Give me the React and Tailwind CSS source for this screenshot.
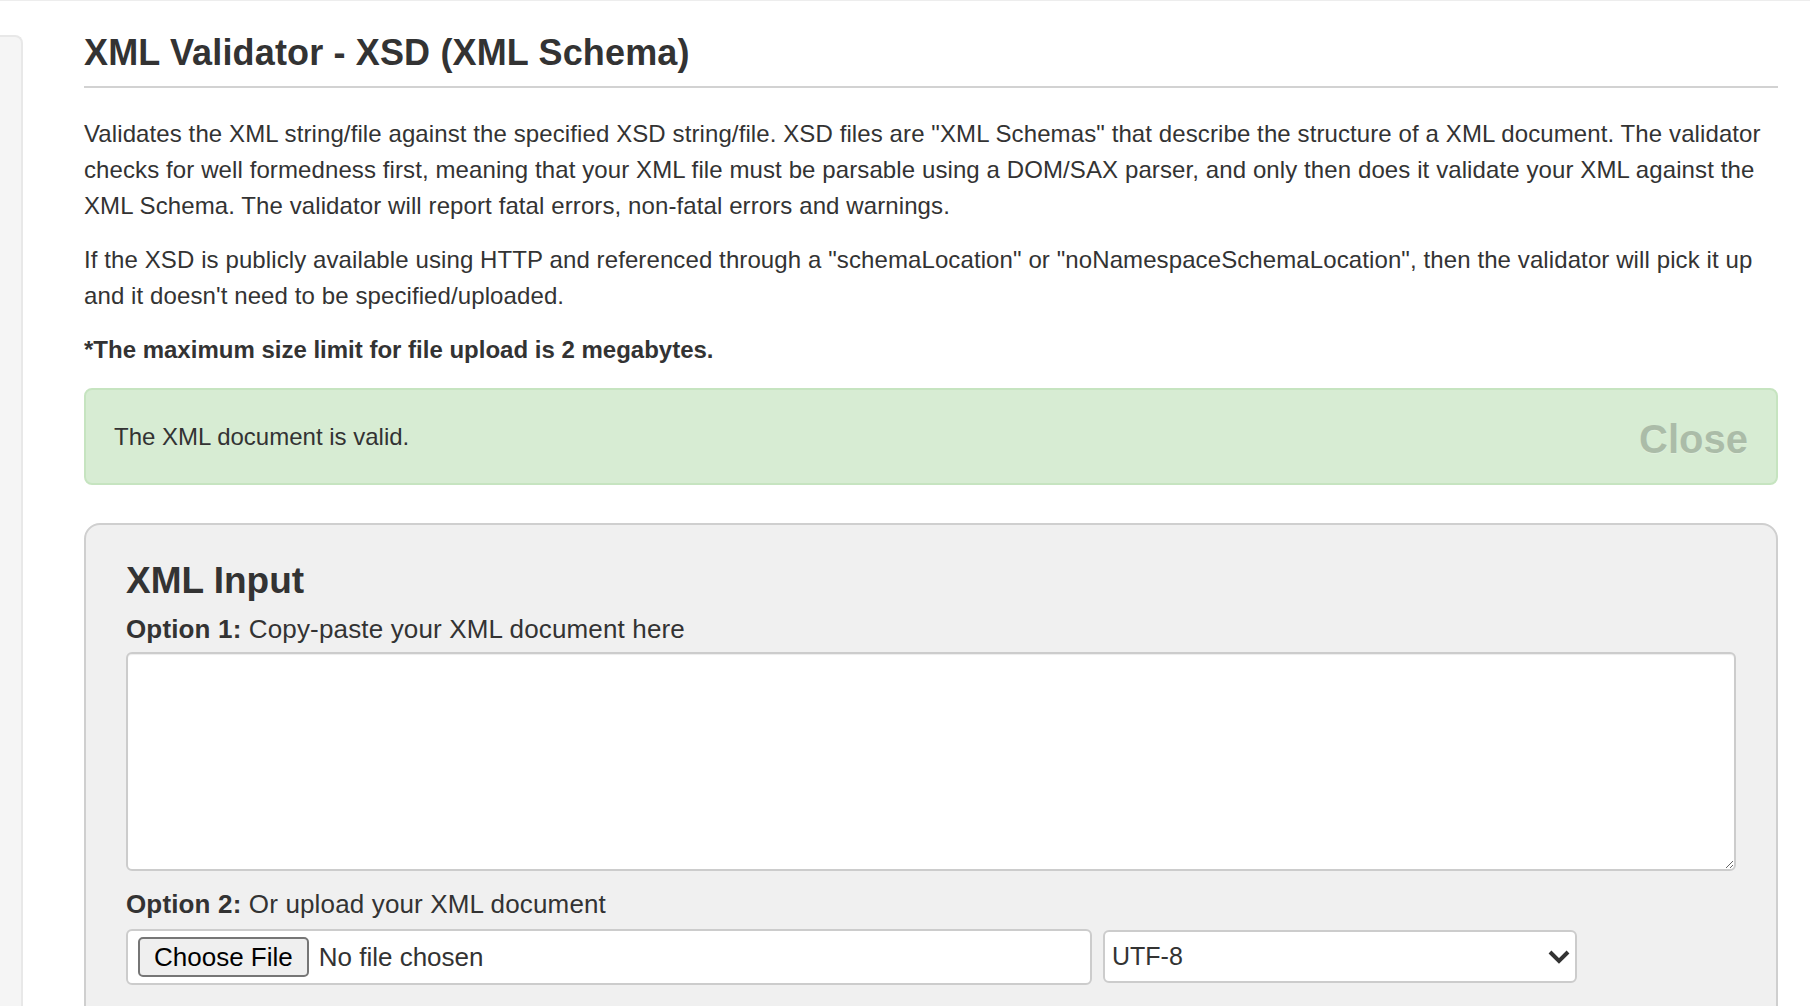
const App = () => {
  return (
    <div className="min-h-screen bg-white text-[#333] font-['Liberation_Sans',Arial,sans-serif]">
      <div className="h-px bg-[#ededed]" />
      <div className="flex">
        {/* Left rail */}
        <aside className="mt-[34px] w-[23px] shrink-0 min-h-[971px] rounded-tr-[8px] border-t-2 border-r-2 border-[#e8e8e8] bg-[#f5f5f5]" />

        <main className="ml-[61px] mr-[32px] flex-1 min-w-0">
          <h1 className="mt-[32px] border-b-2 border-[#d2d2d2] pb-[13px] text-[36px] font-bold leading-[40px] tracking-[0.15px]">
            XML Validator - XSD (XML Schema)
          </h1>

          <p className="mt-[28px] mb-[18px] text-[24px] leading-[36px] tracking-[0.1px]">
            Validates the XML string/file against the specified XSD string/file. XSD files are "XML Schemas" that
            describe the structure of a XML document. The validator checks for well formedness first, meaning that
            your XML file must be parsable using a DOM/SAX parser, and only then does it validate your XML against the
            XML Schema. The validator will report fatal errors, non-fatal errors and warnings.
          </p>
          <p className="mb-[18px] text-[24px] leading-[36px] tracking-[0.1px]">
            If the XSD is publicly available using HTTP and referenced through a "schemaLocation" or
            "noNamespaceSchemaLocation", then the validator will pick it up and it doesn't need to be
            specified/uploaded.
          </p>
          <p className="mb-[20px] text-[24px] font-bold leading-[36px]">
            *The maximum size limit for file upload is 2 megabytes.
          </p>

          {/* Success alert */}
          <div className="flex h-[97px] items-center justify-between rounded-[8px] border-2 border-[#c6e4c0] bg-[#d7ecd3] px-[28px]">
            <span className="text-[24px] leading-[36px]">The XML document is valid.</span>
            <button className="mt-[4px] text-[40px] font-bold leading-none text-black opacity-20 [text-shadow:0_1px_0_#fff]">
              Close
            </button>
          </div>

          {/* XML input panel */}
          <section className="mt-[38px] rounded-[16px] border-2 border-[#cfcfcf] bg-[#f0f0f0] px-[40px] pt-[36px] pb-[40px]">
            <h2 className="mb-[10px] text-[37px] font-bold leading-[40px]">XML Input</h2>

            <label className="mb-[5px] block text-[26px] leading-[36px] tracking-[0.15px]">
              <span className="font-bold">Option 1:</span> Copy-paste your XML document here
            </label>
            <textarea className="block h-[219px] w-full resize-y rounded-[6px] border-2 border-[#cccccc] bg-white p-2 text-[22px] shadow-[inset_0_1px_1px_rgba(0,0,0,0.075)] outline-none" />

            <label className="mt-[15px] mb-[7px] block text-[26px] leading-[36px] tracking-[0.15px]">
              <span className="font-bold">Option 2:</span> Or upload your XML document
            </label>
            <div className="flex items-start gap-[11px]">
              <div className="flex h-[56px] w-[966px] items-center rounded-[6px] border-2 border-[#cccccc] bg-white pl-[10px]">
                <button className="h-[40px] rounded-[5px] border-2 border-[#767676] bg-[#efefef] px-[14px] text-[26px] leading-none text-black">
                  Choose File
                </button>
                <span className="ml-[10px] text-[26px]">No file chosen</span>
              </div>
              <div className="relative mt-px h-[53px] w-[474px]">
                <select className="h-full w-full appearance-none rounded-[6px] border-2 border-[#cccccc] bg-white pl-[7px] text-[25px] text-[#333] outline-none">
                  <option>UTF-8</option>
                </select>
                <svg
                  className="pointer-events-none absolute right-[7px] top-1/2 -translate-y-1/2"
                  width="22"
                  height="14"
                  viewBox="0 0 22 14"
                  fill="none"
                  stroke="#333"
                  strokeWidth="4"
                >
                  <polyline points="2,2 11,11 20,2" />
                </svg>
              </div>
            </div>
          </section>
        </main>
      </div>
    </div>
  );
};

export default App;
